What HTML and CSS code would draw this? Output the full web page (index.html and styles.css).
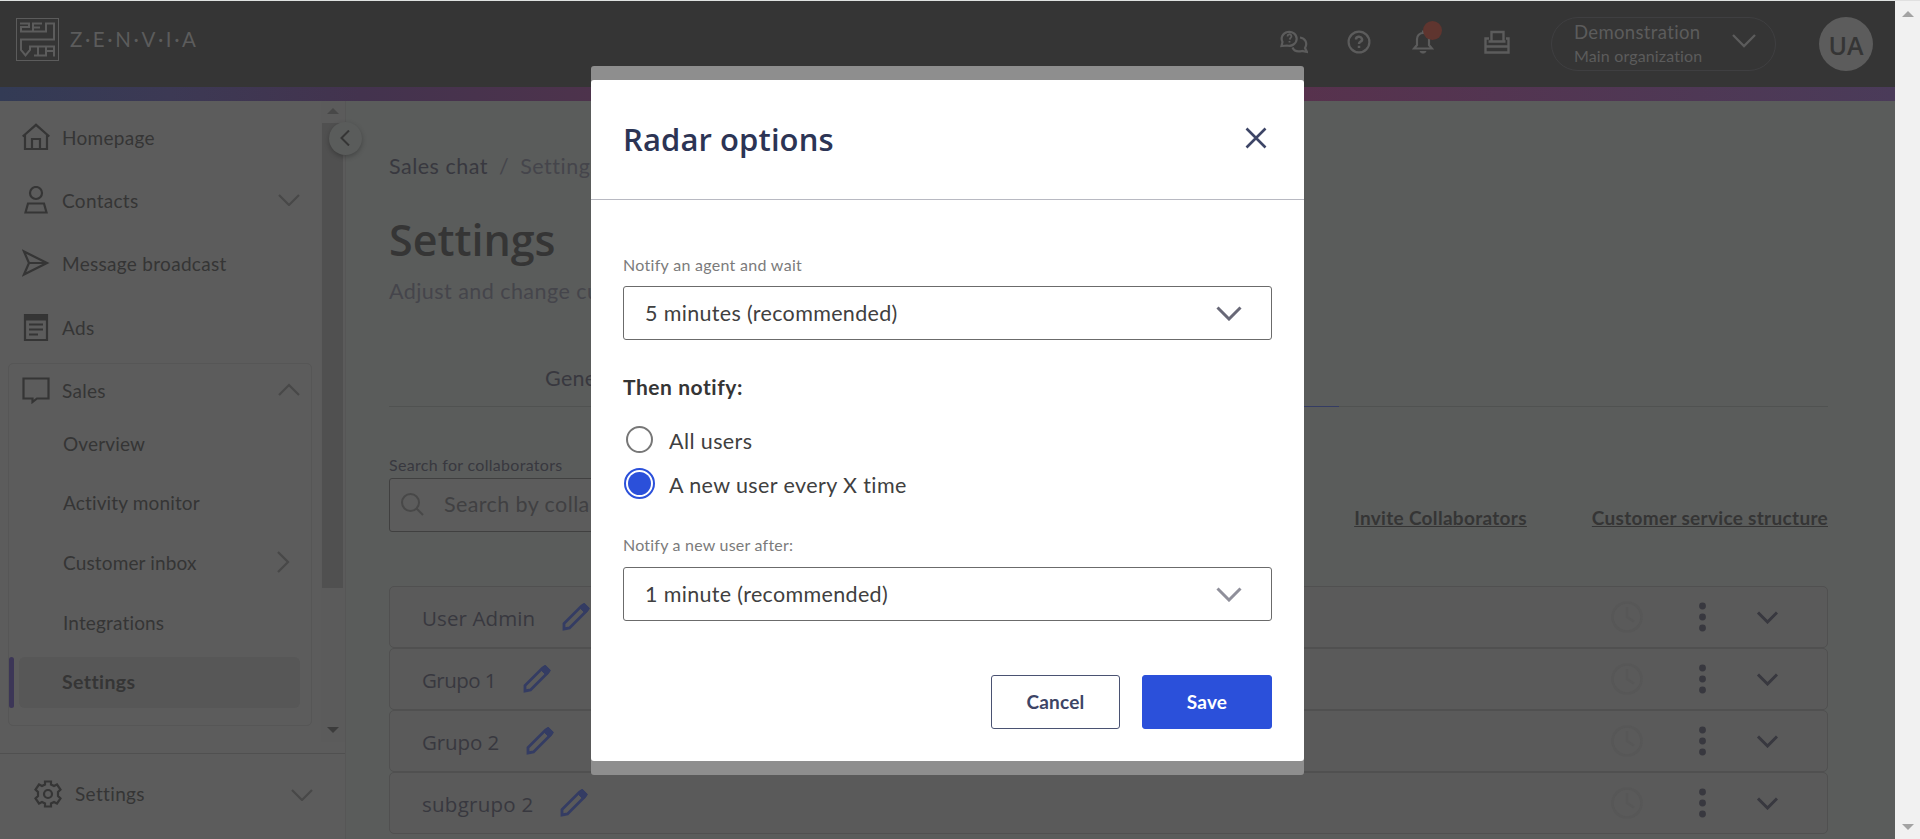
FILE: index.html
```html
<!DOCTYPE html>
<html lang="en">
<head>
    <meta charset="UTF-8">
    <meta name="viewport" content="width=device-width, initial-scale=1.0">
    <title>Settings - Sales chat</title>
    <link rel="stylesheet" href="styles.css">
</head>
<body>
    <div class="page">
        <!-- Top bar -->
        <header class="topbar">
            <div class="logo">
                <svg width="44" height="44" viewBox="0 0 44 44" fill="none" stroke="#5c5c5c">
                    <rect x="0.5" y="0.5" width="42" height="42"/>
                    <path stroke-width="2" d="M4 5.500H13V9H5V13.500H30V5.500H38V21.500H5V32L9.500 37.500L14 32V28.500H38V38.500M17 13V5.500H26M18 9.500H24M22 29V37M18 37.500H30V33H37M30 29V33"/>
                </svg>
                <span class="brand">Z·E·N·V·I·A</span>
            </div>
            <div class="actions">
                <svg class="ico-chat" width="28" height="24" viewBox="0 0 28 24" fill="none" stroke="#5c5c5c" stroke-width="2.200">
                    <path d="M1.500 16L2.500 12A7.500 7 0 1 1 7 15.500Z"/>
                    <path d="M20 7.500C25 8 28 13 25 18L27 22L22 21C18 22 14 21 12.500 17.500"/>
                    <path d="M7.500 6.500a2 2 0 1 1 3 1.500l-1 1.500M9.500 11V12.500" stroke-width="1.800"/>
                </svg>
                <svg class="ico-help" width="24" height="24" viewBox="0 0 24 24" fill="none" stroke="#5c5c5c" stroke-width="2.200">
                    <circle cx="12" cy="12" r="10.400"/>
                    <path d="M9 9.500a3 2.700 0 1 1 4.500 2.200Q12 12.500 12 14M12 15.800V18" stroke-width="2.500"/>
                </svg>
                <div class="bell">
                    <svg width="22" height="24" viewBox="0 0 22 24" fill="none" stroke="#5c5c5c" stroke-width="2.200">
                        <path d="M2 18.500H20L17 15V9a6 6 0 0 0-12 0V15ZM11 3V0.500"/>
                        <path d="M8 21.500H14L12.500 23H9.500Z" fill="#5c5c5c" stroke-width="1"/>
                    </svg>
                    <span class="bell-dot"></span>
                </div>
                <svg class="ico-print" width="26" height="24" viewBox="0 0 26 24" fill="none" stroke="#5c5c5c" stroke-width="2.400">
                    <path d="M7.500 11.500V2H19.500V11.500M5 8.500H1.500V22.500H24.500V8.500H22M1.500 16.500H24.500M4.500 11.500H21.500"/>
                </svg>
                <div class="org">
                    <div>
                        <div class="org-name">Demonstration</div>
                        <div class="org-sub">Main organization</div>
                    </div>
                    <svg width="24" height="14" viewBox="0 0 24 14" fill="none" stroke="#5c5c5c" stroke-width="2.300"><path d="M1 1L12 12L23 1"/></svg>
                </div>
                <div class="avatar">UA</div>
            </div>
        </header>
        <div class="rainbow"></div>

        <div class="main">
            <!-- Sidebar -->
            <aside class="sidebar">
                <div class="nav-wrap">
                    <nav class="nav">
                        <a class="nav-item">
                            <svg width="28" height="28" viewBox="0 0 28 28" fill="none" stroke="#353535" stroke-width="2.200"><path d="M0.700 13.500L14 1.800L27.300 13.500M3 12V26H25V12M10 26V16H18V26"/></svg>
                            <span>Homepage</span>
                        </a>
                        <a class="nav-item">
                            <svg width="28" height="28" viewBox="0 0 28 28" fill="none" stroke="#353535" stroke-width="2.200"><circle cx="14" cy="7" r="6"/><path d="M6 17.500H22L24.500 26.500H3.500Z"/></svg>
                            <span>Contacts</span>
                            <svg class="chev" width="22" height="13" viewBox="0 0 22 13" fill="none" stroke="#484848" stroke-width="2.200"><path d="M1 2L11 12L21 2"/></svg>
                        </a>
                        <a class="nav-item">
                            <svg width="28" height="28" viewBox="0 0 28 28" fill="none" stroke="#353535" stroke-width="2.200"><path d="M2 2.500L25 14L2 25.500L7 14ZM7 14H25"/></svg>
                            <span>Message broadcast</span>
                        </a>
                        <a class="nav-item">
                            <svg width="28" height="28" viewBox="0 0 28 28" fill="none" stroke="#353535" stroke-width="2.200"><path d="M3 2H25V27H3Z"/><path d="M2 4.500H26" stroke-width="6"/><path d="M7 11.500H21M7 16.500H21M7 21.500H16"/></svg>
                            <span>Ads</span>
                        </a>
                        <div class="nav-group">
                            <a class="nav-item nav-head">
                                <svg width="28" height="28" viewBox="0 0 28 28" fill="none" stroke="#353535" stroke-width="2.200"><path d="M1.500 2.500H26.500V22.500H15L10.500 26V22.500H1.500Z"/></svg>
                                <span>Sales</span>
                                <svg class="chev" width="22" height="13" viewBox="0 0 22 13" fill="none" stroke="#484848" stroke-width="2.200"><path d="M1 12L11 2L21 12"/></svg>
                            </a>
                            <a class="sub s1">Overview</a>
                            <a class="sub">Activity monitor</a>
                            <a class="sub">Customer inbox
                                <svg width="13" height="22" viewBox="0 0 13 22" fill="none" stroke="#484848" stroke-width="2.200"><path d="M1 1L11 11L1 21"/></svg>
                            </a>
                            <a class="sub">Integrations</a>
                            <div class="sub-active"><span class="bar"></span><a class="pill">Settings</a></div>
                        </div>
                    </nav>
                    <div class="scroll">
                        <i class="tri-up"></i>
                        <i class="thumb"></i>
                        <i class="tri-down"></i>
                    </div>
                </div>
                <div class="side-foot">
                    <svg width="28" height="28" viewBox="0 0 28 28" fill="none" stroke="#353535" stroke-width="2.200"><path d="M11 1.500H17V4.500L20 6L23 4.500L26.500 9.500L24 12V16L26.500 18.500L23 23.500L20 22L17 23.500V26.500H11V23.500L8 22L5 23.500L1.500 18.500L4 16V12L1.500 9.500L5 4.500L8 6L11 4.500Z"/><circle cx="14" cy="14" r="4"/></svg>
                    <span>Settings</span>
                    <svg class="chev" width="22" height="14" viewBox="0 0 22 14" fill="none" stroke="#484848" stroke-width="2.200"><path d="M1 3L11 13L21 3"/></svg>
                </div>
                <span class="collapse">
                    <svg width="10" height="16" viewBox="0 0 10 16" fill="none" stroke="#353535" stroke-width="2"><path d="M9 0.500L1.500 8L9 15.500"/></svg>
                </span>
            </aside>

            <!-- Settings content -->
            <section class="content">
                <div class="crumbs"><span>Sales chat</span><span class="muted">/</span><span class="muted">Settings</span></div>
                <h1>Settings</h1>
                <p class="lead">Adjust and change cu</p>
                <div class="tabs"><span class="tab">Gene</span><i class="tab-line"></i></div>
                <div class="tools">
                    <div class="search-field">
                        <label class="search-label">Search for collaborators</label>
                        <div class="search-box">
                            <svg width="23" height="23" viewBox="0 0 23 23" fill="none" stroke="#484848" stroke-width="2"><circle cx="9.500" cy="9.500" r="8.500"/><path d="M15.500 15.500L22 22"/></svg>
                            <span>Search by colla</span>
                        </div>
                    </div>
                    <a class="link l1">Invite Collaborators</a>
                    <a class="link">Customer service structure</a>
                </div>
                <div class="groups" id="groups"></div>
            </section>
        </div>
    </div>

    <div class="window-scroll"><i class="tri-up"></i><i class="tri-down"></i></div>

    <!-- Radar options modal -->
    <div class="modal-shell">
        <div class="modal">
            <div class="modal-head">
                <h2>Radar options</h2>
                <svg width="22" height="22" viewBox="0 0 22 22" fill="none" stroke="#3d4566" stroke-width="2.600"><path d="M1.500 1.500L20.500 20.500M20.500 1.500L1.500 20.500"/></svg>
            </div>
            <div class="modal-body">
                <label class="small">Notify an agent and wait</label>
                <div class="select">
                    <span>5 minutes (recommended)</span>
                    <svg width="26" height="16" viewBox="0 0 26 16" fill="none" stroke="#686877" stroke-width="3"><path d="M1.500 2.500L13 14L24.500 2.500"/></svg>
                </div>
                <h3>Then notify:</h3>
                <div class="radio"><i class="dot"></i><span>All users</span></div>
                <div class="radio"><i class="dot on"></i><span>A new user every X time</span></div>
                <label class="small m2">Notify a new user after:</label>
                <div class="select">
                    <span>1 minute (recommended)</span>
                    <svg width="26" height="16" viewBox="0 0 26 16" fill="none" stroke="#8f8f9a" stroke-width="3"><path d="M1.500 2.500L13 14L24.500 2.500"/></svg>
                </div>
                <div class="buttons">
                    <button type="button" class="btn cancel">Cancel</button>
                    <button type="button" class="btn save">Save</button>
                </div>
            </div>
        </div>
    </div>

    <script>
        const groups = [['User Admin', 'g1'], ['Grupo 1', 'g2'], ['Grupo 2', 'g3'], ['subgrupo 2', 'g4']];

        document.getElementById('groups').innerHTML = groups.map(([name, cls]) => `
            <div class="group">
                <span class="group-name ${cls}">${name}</span>
                <svg class="pencil" width="28" height="28" viewBox="0 0 28 28" fill="none" stroke="#343c63" stroke-width="2.800"><path d="M2 26V20.500L19.500 3L22 1.500L26 5.500L24.500 8L7.500 25Z"/><path d="M18 5L21 1.500Q22.500 0.500 24 2L26 4Q27.500 5.500 26.500 7L23 10Z" fill="#343c63" stroke-width="1"/></svg>
                <svg class="clock" width="32" height="32" viewBox="0 0 32 32" fill="none" stroke="#575757" stroke-width="2.500"><circle cx="16" cy="16" r="14.500"/><path d="M16 6V16L23 20.500"/></svg>
                <svg class="dots" width="8" height="30" viewBox="0 0 8 30" fill="#38383f"><circle cx="4.500" cy="4" r="3.400"/><circle cx="4.500" cy="15" r="3.400"/><circle cx="4.500" cy="26" r="3.400"/></svg>
                <svg class="arrow" width="22" height="14" viewBox="0 0 22 14" fill="none" stroke="#38383f" stroke-width="3"><path d="M2 2.500L11.500 12L21 2.500"/></svg>
            </div>`).join('');
    </script>
</body>
</html>
```
FILE: styles.css
```css
* {
    box-sizing: border-box;
}
body {
    margin: 0;
    height: 839px;
    overflow: hidden;
    display: flex;
    font-family: Lato, sans-serif;
    color: #353535;
    background-color: #5a5c5b;
}
svg {
    flex: none;
    display: block;
}
h1, h2, h3, p {
    margin: 0;
}
.page {
    width: 1895px;
    height: 839px;
    flex: none;
    display: flex;
    flex-direction: column;
    border-top: 1px solid #dfe2e1;
}

/* Top bar */
.topbar {
    height: 86px;
    flex: none;
    background-color: #353535;
    display: flex;
    justify-content: space-between;
    padding: 0 22px 0 16px;
}
.logo {
    display: flex;
    gap: 10px;
    padding-top: 17px;
}
.brand {
    color: #5c5c5c;
    font-size: 20.500px;
    line-height: 43px;
    letter-spacing: 2.600px;
}
.actions {
    display: flex;
    align-items: center;
    height: 86px;
}
.ico-chat {
    margin: 0 39px 5px 0;
}
.ico-help {
    margin: 0 41px 5px 0;
}
.bell {
    position: relative;
    margin: 0 50px 5px 0;
}
.bell-dot {
    position: absolute;
    left: 11px;
    top: -9px;
    width: 19px;
    height: 19px;
    border-radius: 50%;
    background-color: #5f352f;
}
.ico-print {
    margin: 0 41px 5px 0;
}
.org {
    width: 225px;
    height: 54px;
    border: 1px solid #3f3f41;
    border-radius: 28px;
    display: flex;
    align-items: center;
    justify-content: space-between;
    padding: 0 19px 1px 22px;
    margin-right: 43px;
    color: #5c5c5c;
}
.org svg {
    margin-bottom: 6px;
}
.org-name {
    font-size: 18.500px;
    line-height: 25px;
    letter-spacing: 0.350px;
}
.org-sub {
    font-size: 16px;
    line-height: 22px;
    letter-spacing: 0.150px;
}
.avatar {
    width: 54px;
    height: 54px;
    border-radius: 50%;
    background-color: #5c5c5c;
    color: #353535;
    font: 600 25px/57px "Open Sans", sans-serif;
    text-align: center;
}
.rainbow {
    height: 14px;
    flex: none;
    background: linear-gradient(90deg, #333b55 0, #3c3954 170px, #43334e 360px, #56334a 800px, #57324d 1300px, #4a3b59 1895px);
}
.main {
    flex: 1;
    min-height: 0;
    display: flex;
}

/* Sidebar */
.sidebar {
    position: relative;
    width: 346px;
    flex: none;
    background-color: #5c5c5c;
    border-right: 1px solid #565656;
    display: flex;
    flex-direction: column;
}
.nav-wrap {
    height: 653px;
    flex: none;
    display: flex;
    justify-content: space-between;
    border-bottom: 1px solid #505050;
}
.nav {
    width: 312px;
    padding: 4px 0 0 8px;
}
.nav-item {
    display: flex;
    align-items: center;
    gap: 12px;
    height: 63.300px;
    padding: 0 12px 0 14px;
    font-size: 19px;
    letter-spacing: 0.300px;
}
.nav-item span {
    padding-top: 1px;
}
.chev {
    margin-left: auto;
}
.nav-group {
    height: 363px;
    margin-top: 5px;
    border: 1px solid #565656;
    border-radius: 5px;
}
.nav-head {
    height: 51px;
    padding: 0 11px 0 13px;
}
.sub {
    display: flex;
    align-items: center;
    justify-content: space-between;
    height: 60px;
    padding: 0 21px 0 54px;
    font-size: 19px;
    letter-spacing: 0.150px;
}
.s1 {
    height: 57px;
}
.sub-active {
    display: flex;
    gap: 5px;
    height: 51px;
    margin-top: 5px;
}
.bar {
    width: 5px;
    border-radius: 3px;
    background-color: #3c3657;
}
.pill {
    width: 281px;
    border-radius: 6px;
    background-color: #575757;
    padding-left: 43px;
    font-size: 19.500px;
    font-weight: 700;
    line-height: 49px;
    letter-spacing: 0.400px;
}
.scroll {
    width: 24px;
    height: 641px;
    background-color: #5b5b5b;
    display: flex;
    flex-direction: column;
    align-items: center;
    padding: 7px 1px 9px 0;
}
.tri-up, .tri-down {
    border: 6px solid transparent;
}
.tri-up {
    border-top: 0;
    border-bottom-color: #484848;
}
.tri-down {
    border-bottom: 0;
    border-top-color: #3c3c3c;
    margin-top: auto;
}
.thumb {
    width: 21px;
    height: 465px;
    margin-top: 9px;
    background-color: #505050;
}
.side-foot {
    flex: 1;
    display: flex;
    align-items: center;
    gap: 13px;
    padding: 0 32px 6px 34px;
    font-size: 19px;
    letter-spacing: 0.350px;
}
.collapse {
    position: absolute;
    left: 329px;
    top: 21px;
    width: 33px;
    height: 33px;
    border-radius: 50%;
    background-color: #5a5c5b;
    box-shadow: 0 2px 5px rgba(0, 0, 0, 0.25);
    display: flex;
    align-items: center;
    justify-content: center;
    padding: 0 2px 2px 0;
}

/* Content */
.content {
    flex: 1;
    padding: 50px 67px 0 43px;
    color: #38383f;
}
.crumbs {
    display: flex;
    gap: 11px;
    font-size: 21.500px;
    line-height: 30px;
    height: 30px;
    letter-spacing: 0.500px;
}
.muted {
    color: #45454b;
}
h1 {
    margin-top: 29px;
    font: 600 43px/60px "Open Sans", sans-serif;
    color: #353535;
}
.lead {
    margin-top: 5px;
    font-size: 21.500px;
    line-height: 32px;
    letter-spacing: 0.450px;
    color: #45454b;
}
.tabs {
    position: relative;
    height: 100px;
    border-bottom: 1px solid #505251;
    padding: 56px 0 0 156px;
    font-size: 21.500px;
    line-height: 30px;
    letter-spacing: 0.300px;
}
.tab-line {
    position: absolute;
    left: 650px;
    bottom: -1px;
    width: 300px;
    height: 1px;
    background-color: #343c63;
}
.tools {
    display: flex;
    align-items: flex-end;
    margin-top: 47px;
    height: 78px;
}
.search-label {
    display: block;
    font-size: 16px;
    line-height: 22px;
    letter-spacing: 0.300px;
    margin-bottom: 2px;
}
.search-box {
    width: 430px;
    height: 54px;
    border: 1px solid #404040;
    border-radius: 3px;
    background-color: #5c5c5c;
    display: flex;
    align-items: center;
    gap: 20px;
    padding: 0 11px 2px;
    font-size: 21.500px;
    letter-spacing: 0.400px;
    color: #404042;
}
.link {
    font-size: 19px;
    font-weight: 700;
    line-height: 26px;
    letter-spacing: 0.310px;
    color: #353535;
    text-decoration: underline;
    margin-bottom: 1px;
}
.l1 {
    margin-left: auto;
    margin-right: 65px;
}
.groups {
    margin-top: 54px;
}
.group {
    height: 62px;
    border: 1px solid #505050;
    border-radius: 5px;
    background-color: #5a5a5a;
    display: flex;
    align-items: center;
    padding: 0 49px 0 32px;
}
.group-name {
    font: 400 20.500px/30px "Open Sans", sans-serif;
    padding-top: 1px;
}
.g1 {
    letter-spacing: 0.100px;
}
.g2 {
    letter-spacing: -0.550px;
}
.g3 {
    letter-spacing: -0.100px;
}
.g4 {
    letter-spacing: 0.250px;
}
.pencil {
    margin-left: 27px;
}
.clock {
    margin-left: auto;
    margin-right: 55px;
}
.dots {
    margin-right: 50px;
}

/* Browser scrollbar */
.window-scroll {
    flex: 1;
    border-top: 1px solid #e0e0e0;
    background-color: #f1f1f1;
    display: flex;
    flex-direction: column;
    align-items: center;
    padding: 10px 0 9px;
}
.window-scroll .tri-up {
    border-bottom-color: #a3a3a3;
}
.window-scroll .tri-down {
    border-top-color: #a3a3a3;
}

/* Modal */
.modal-shell {
    position: absolute;
    left: 591px;
    top: 66px;
    width: 713px;
    height: 709px;
    padding: 14px 0;
    border-radius: 3px;
    background-color: #8e8e8e;
}
.modal {
    height: 681px;
    border-radius: 3px;
    background-color: #fff;
}
.modal-head {
    height: 120px;
    border-bottom: 1px solid #b8b9c2;
    display: flex;
    align-items: center;
    justify-content: space-between;
    padding: 0 37px 4px 32px;
}
h2 {
    font: 600 31px/40px "Open Sans", sans-serif;
    letter-spacing: 0.100px;
    color: #2c3454;
    padding-top: 3px;
}
.modal-body {
    padding: 53px 32px 0;
}
.small {
    display: block;
    font-size: 16px;
    line-height: 24px;
    letter-spacing: 0.300px;
    color: #7b7b7b;
}
.select {
    height: 54px;
    border: 1px solid #6b6b6b;
    border-radius: 3px;
    margin-top: 9px;
    padding: 0 29px 0 21px;
    display: flex;
    align-items: center;
    justify-content: space-between;
    font-size: 21.500px;
    letter-spacing: 0.330px;
    color: #404040;
}
.select span {
    padding-bottom: 1px;
}
h3 {
    margin: 32px 0 15px;
    font-size: 21px;
    line-height: 30px;
    letter-spacing: 0.550px;
    color: #353535;
}
.radio {
    display: flex;
    align-items: center;
    gap: 14px;
    height: 44px;
    padding-left: 1px;
    font-size: 21.500px;
    letter-spacing: 0.400px;
    color: #404040;
}
.radio span {
    padding-top: 4px;
}
.dot {
    width: 27px;
    height: 27px;
    margin: 0 2px;
    border: 2px solid #777;
    border-radius: 50%;
}
.dot.on {
    width: 31px;
    height: 31px;
    margin: 0;
    border-color: #2b50da;
    background: #2b50da content-box;
    padding: 2px;
}
.m2 {
    margin-top: 28px;
    margin-bottom: 10px;
    letter-spacing: 0.220px;
}
.buttons {
    display: flex;
    justify-content: flex-end;
    gap: 22px;
    margin-top: 54px;
}
.btn {
    width: 130px;
    height: 54px;
    padding-bottom: 3px;
    border: 1px solid #4a5272;
    border-radius: 3px;
    background-color: #fff;
    color: #3d4566;
    font: 700 19px Lato, sans-serif;
    letter-spacing: 0.200px;
}
.cancel {
    width: 129px;
}
.save {
    border-color: #2b50da;
    background-color: #2b50da;
    color: #fff;
}
```
